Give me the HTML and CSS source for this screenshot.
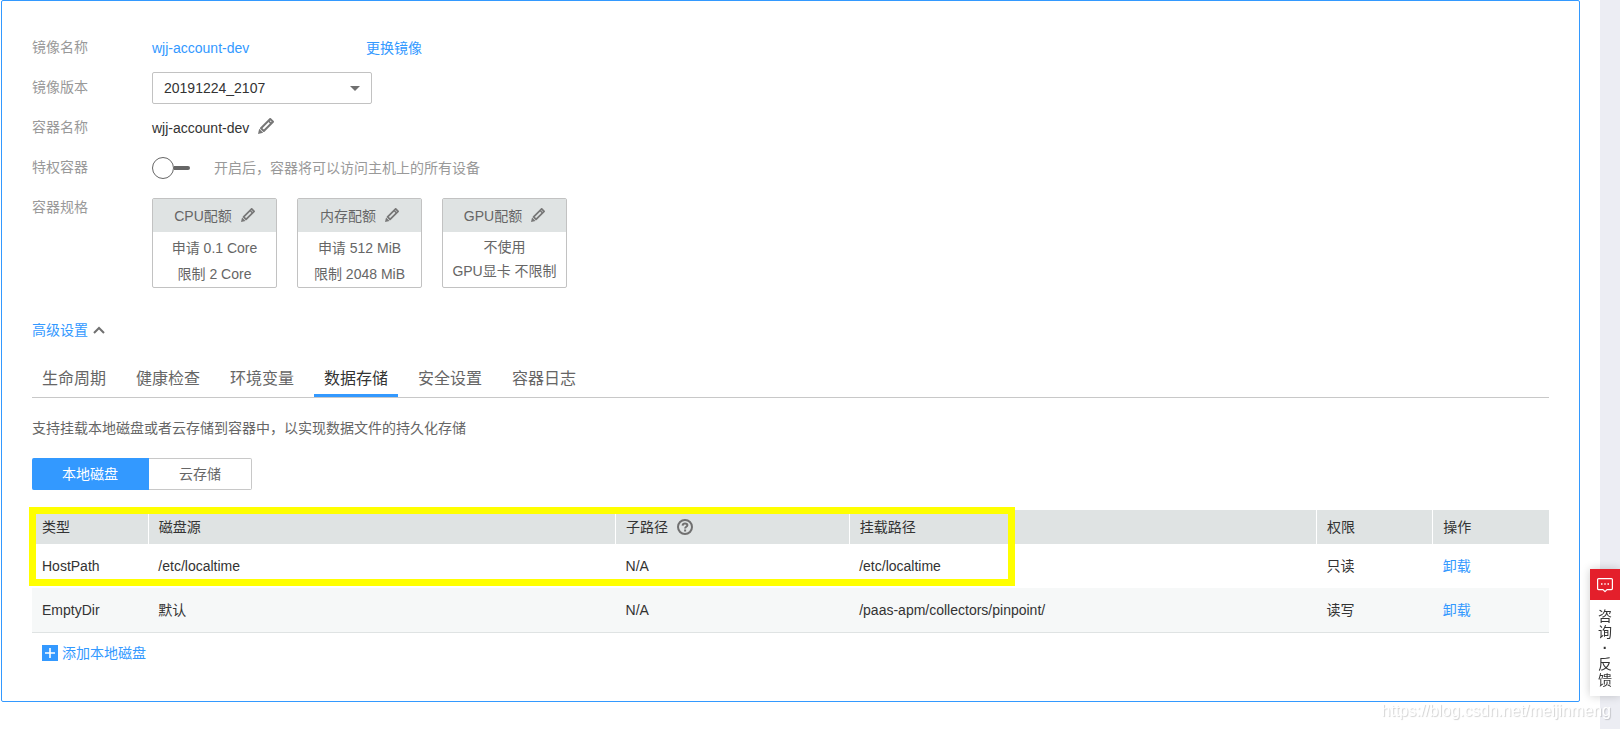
FILE: index.html
```html
<!DOCTYPE html>
<html lang="zh-CN">
<head>
<meta charset="utf-8">
<title>容器设置</title>
<link rel="stylesheet" href="styles.css">
</head>
<body>
<svg class="sprite" aria-hidden="true">
  <symbol id="pencil" viewBox="0 0 16 16">
    <path fill="currentColor" d="M0 16l1.2-5.2 4 4z"/>
    <path fill="none" stroke="currentColor" stroke-width="2" stroke-linejoin="round" d="M3 10.2L12.2 1 15 3.8 5.8 13z"/>
    <path stroke="currentColor" stroke-width="1.6" d="M10.4 2.8l2.8 2.8"/>
  </symbol>
</svg>
<main class="page">
  <section class="panel">
    <div class="form">
      <span class="label">镜像名称</span>
      <div class="field image-field">
        <a class="image-name" href="#">wjj-account-dev</a>
        <a href="#">更换镜像</a>
      </div>

      <label class="label" for="version">镜像版本</label>
      <div class="field">
        <div class="select-box">
          <select id="version"><option>20191224_2107</option></select>
          <svg class="caret" width="10" height="5" viewBox="0 0 10 5" aria-hidden="true"><path fill="#707070" d="M0 0h10L5 5z"/></svg>
        </div>
      </div>

      <span class="label">容器名称</span>
      <div class="field name-field">
        <span>wjj-account-dev</span>
        <button class="icon-button" type="button" aria-label="编辑容器名称"><svg width="16" height="16"><use href="#pencil"/></svg></button>
      </div>

      <label class="label" for="privileged">特权容器</label>
      <div class="field switch-field">
        <input class="switch" id="privileged" type="checkbox">
        <span class="hint">开启后，容器将可以访问主机上的所有设备</span>
      </div>

      <span class="label">容器规格</span>
      <div class="cards">
        <div class="card">
          <div class="card-head">CPU配额<button class="icon-button" type="button" aria-label="编辑CPU配额"><svg width="14" height="14"><use href="#pencil"/></svg></button></div>
          <div class="card-body"><span>申请 0.1 Core</span><span>限制 2 Core</span></div>
        </div>
        <div class="card">
          <div class="card-head">内存配额<button class="icon-button" type="button" aria-label="编辑内存配额"><svg width="14" height="14"><use href="#pencil"/></svg></button></div>
          <div class="card-body"><span>申请 512 MiB</span><span>限制 2048 MiB</span></div>
        </div>
        <div class="card">
          <div class="card-head">GPU配额<button class="icon-button" type="button" aria-label="编辑GPU配额"><svg width="14" height="14"><use href="#pencil"/></svg></button></div>
          <div class="card-body compact"><span>不使用</span><span>GPU显卡 不限制</span></div>
        </div>
      </div>
    </div>

    <a class="advanced" href="#">高级设置
      <svg width="12" height="8" viewBox="0 0 12 8" aria-hidden="true"><path fill="none" stroke="#707070" stroke-width="2" d="M1 7l5-5 5 5"/></svg>
    </a>

    <nav class="tabs">
      <a href="#">生命周期</a>
      <a href="#">健康检查</a>
      <a href="#">环境变量</a>
      <a class="active" href="#">数据存储</a>
      <a href="#">安全设置</a>
      <a href="#">容器日志</a>
    </nav>

    <p class="description">支持挂载本地磁盘或者云存储到容器中，以实现数据文件的持久化存储</p>

    <div class="segments">
      <button class="segment active" type="button">本地磁盘</button>
      <button class="segment" type="button">云存储</button>
    </div>

    <div class="table-wrap">
      <table class="volumes">
        <colgroup>
          <col class="narrow"><col class="wide"><col class="medium"><col class="wide"><col class="narrow"><col>
        </colgroup>
        <thead>
          <tr>
            <th>类型</th>
            <th>磁盘源</th>
            <th><span class="help-title">子路径
              <svg width="16" height="16" viewBox="0 0 16 16" fill="none" stroke="#707070" aria-hidden="true"><circle cx="8" cy="8" r="7" stroke-width="2"/><path stroke-width="2" d="M5.6 6.6C5.7 5 6.7 4.4 8 4.4s2.4.7 2.4 1.8c0 1.6-2.3 1.6-2.3 3.2M8.1 10.4v2"/></svg></span></th>
            <th>挂载路径</th>
            <th>权限</th>
            <th>操作</th>
          </tr>
        </thead>
        <tbody>
          <tr><td>HostPath</td><td>/etc/localtime</td><td>N/A</td><td>/etc/localtime</td><td>只读</td><td><a href="#">卸载</a></td></tr>
          <tr><td>EmptyDir</td><td>默认</td><td>N/A</td><td>/paas-apm/collectors/pinpoint/</td><td>读写</td><td><a href="#">卸载</a></td></tr>
        </tbody>
      </table>
      <div class="highlight"></div>
    </div>

    <a class="add" href="#">
      <svg width="16" height="16" viewBox="0 0 16 16" aria-hidden="true"><path fill="#39f" d="M0 0h16v16H0z"/><path stroke="#fff" stroke-width="1.6" d="M8 3v10M3 8h10"/></svg>
      添加本地磁盘
    </a>
  </section>
</main>
<aside class="feedback">
  <button class="feedback-icon" type="button" aria-label="咨询反馈">
    <svg width="16" height="16" viewBox="0 0 16 16" fill="none" stroke="#fff" aria-hidden="true"><path stroke-width="1.2" stroke-linejoin="round" d="M1.6 1.6h12.8q1 0 1 1v9q0 1-1 1H10l-2 2-2-2H1.6q-1 0-1-1v-9q0-1 1-1z"/><path stroke-width="1.4" d="M4 7h1.5M7.3 7h1.4M10.5 7H12"/></svg>
  </button>
  <div class="feedback-text"><span>咨</span><span>询</span><b>·</b><span>反</span><span>馈</span></div>
</aside>
<div class="watermark">https://blog.csdn.net/meijinmeng</div>
</body>
</html>
```
FILE: styles.css
```css
* {
  box-sizing: border-box;
}

body {
  margin: 0;
  min-height: 100vh;
  padding-right: 20px;
  background: #ecedf3;
  color: #333;
  font: 14px/20px "Liberation Sans", Arial, "Noto Sans CJK SC", sans-serif;
}

a {
  color: #39f;
  text-decoration: none;
}

button,
select {
  font: inherit;
}

.sprite {
  position: absolute;
  width: 0;
  height: 0;
}

.page {
  min-height: 100vh;
  padding: 0 20px 24px 1px;
  background: #fff;
}

.panel {
  padding: 31px 30px 38px;
  border: 1px solid #39f;
  border-radius: 2px;
}

.form {
  display: grid;
  grid-template-columns: 120px 1fr;
  row-gap: 8px;
}

.label {
  padding-top: 5px;
  color: #999;
}

.field {
  display: flex;
  align-items: center;
  height: 32px;
}

.image-name {
  width: 214px;
}

.select-box {
  position: relative;
  width: 220px;
}

.select-box select {
  width: 100%;
  height: 32px;
  padding: 0 11px;
  appearance: none;
  border: 1px solid #c2c2c2;
  border-radius: 2px;
  background: #fff;
  color: #333;
}

.caret {
  position: absolute;
  top: 14px;
  right: 12px;
}

.name-field {
  gap: 9px;
}

.name-field .icon-button {
  padding-bottom: 4px;
}

.icon-button {
  display: inline-flex;
  padding: 0;
  border: 0;
  background: none;
  color: #777;
}

.switch-field {
  gap: 24px;
}

.switch {
  display: flex;
  align-items: center;
  width: 38px;
  height: 20px;
  margin: 0;
  appearance: none;
}

.switch::before {
  content: "";
  width: 20px;
  height: 20px;
  border: 1px solid #666;
  border-radius: 50%;
}

.switch::after {
  content: "";
  flex: 1;
  height: 4px;
  border-radius: 0 2px 2px 0;
  background: #666;
}

.hint {
  color: #999;
}

.cards {
  display: flex;
  gap: 20px;
  padding-top: 6px;
}

.card {
  width: 125px;
  height: 90px;
  border: 1px solid #c2c2c2;
  border-radius: 2px;
  color: #666;
}

.card-head {
  display: flex;
  align-items: center;
  justify-content: center;
  gap: 9px;
  height: 33px;
  background: #dfe3e3;
}

.card-head .icon-button {
  padding-bottom: 2px;
}

.card-body {
  display: flex;
  flex-direction: column;
  align-items: center;
  padding-top: 3px;
  line-height: 26px;
}

.card-body.compact {
  line-height: 24px;
}

.advanced {
  display: flex;
  align-items: center;
  gap: 5px;
  margin-top: 32px;
}

.tabs {
  display: flex;
  gap: 10px;
  margin-top: 22px;
  border-bottom: 1px solid #c8c8c8;
}

.tabs a {
  padding: 5px 10px 3px;
  border-bottom: 3px solid transparent;
  color: #666;
  font-size: 16px;
  line-height: 24px;
}

.tabs .active {
  border-color: #39f;
  color: #333;
}

.description {
  margin: 20px 0;
  color: #666;
}

.segments {
  display: flex;
}

.segment {
  height: 32px;
  padding: 0 30px;
  border: 1px solid #c8c8c8;
  border-left: 0;
  border-radius: 0 2px 2px 0;
  background: #fff;
  color: #666;
}

.segment.active {
  border-color: #39f;
  border-radius: 2px 0 0 2px;
  background: #39f;
  color: #fff;
}

.table-wrap {
  position: relative;
  margin-top: 20px;
}

.volumes {
  width: 100%;
  table-layout: fixed;
  border-collapse: collapse;
  border-bottom: 1px solid #dfe3e3;
}

.narrow {
  width: 7.67%;
}

.medium {
  width: 15.4%;
}

.wide {
  width: 30.8%;
}

.volumes th,
.volumes td {
  padding: 0 10px;
  font-weight: normal;
  text-align: left;
}

.volumes th {
  height: 34px;
  background: #dfe3e3;
}

.volumes th + th {
  border-left: 1px solid #fff;
}

.volumes td {
  height: 44px;
}

.volumes tbody tr:nth-child(2) {
  background: #f6f8f8;
}

.help-title {
  display: flex;
  align-items: center;
  gap: 9px;
}

.highlight {
  position: absolute;
  top: -3px;
  left: -3px;
  width: 65%;
  height: 79px;
  border: 7px solid #ff0;
  pointer-events: none;
}

.add {
  display: flex;
  align-items: center;
  gap: 4px;
  margin: 10px 10px 0;
}

.feedback {
  position: fixed;
  right: 0;
  bottom: 33px;
  width: 30px;
  background: #fff;
  box-shadow: 0 0 10px rgba(0, 0, 0, 0.2);
}

.feedback-icon {
  display: flex;
  align-items: center;
  justify-content: center;
  width: 100%;
  height: 31px;
  padding: 0;
  border: 0;
  background: #e41f2b;
}

.feedback-text {
  display: flex;
  flex-direction: column;
  align-items: center;
  padding: 8px 0;
  line-height: 16px;
}

.watermark {
  position: fixed;
  right: 9px;
  bottom: 8px;
  color: #fff;
  font-size: 16px;
  text-shadow: 1px 1px 1px rgba(0, 0, 0, 0.18);
}
```
